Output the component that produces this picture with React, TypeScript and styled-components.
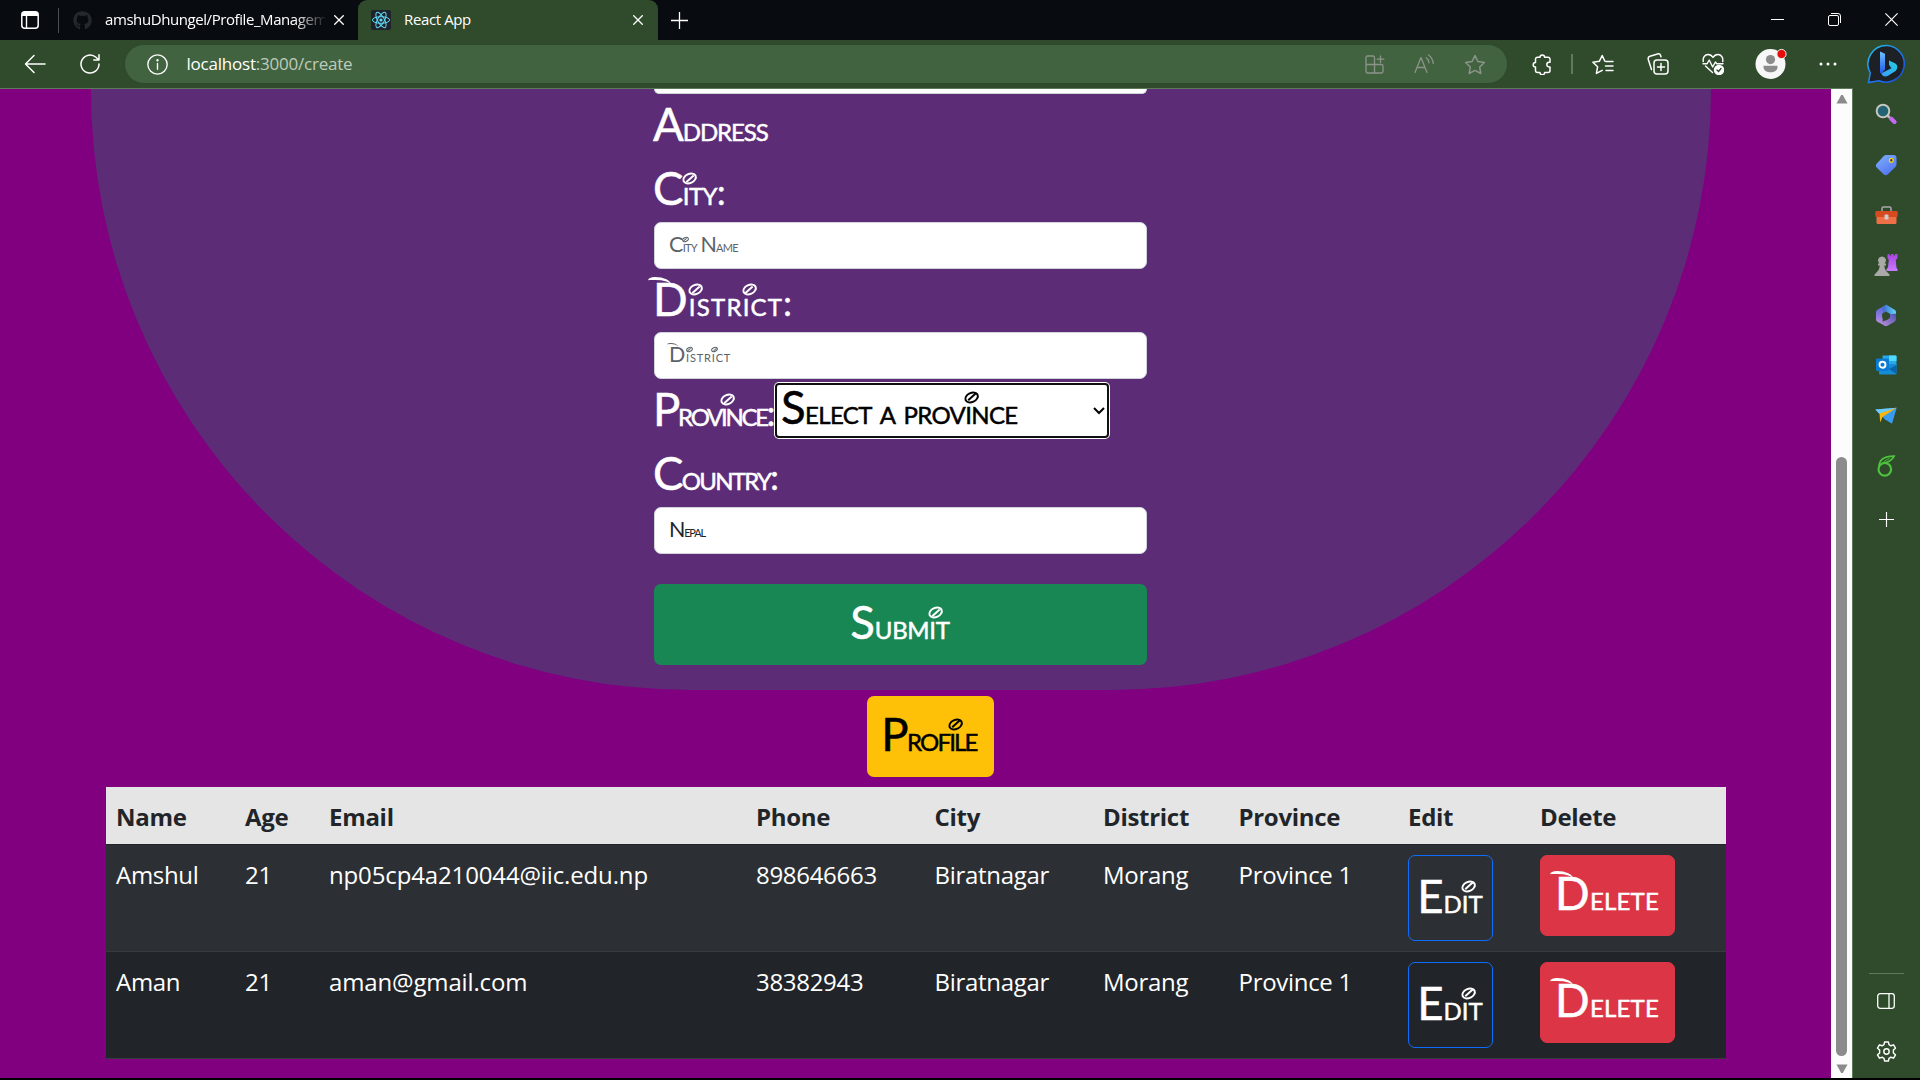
import React from "react";
import styled, { createGlobalStyle, css } from "styled-components";
import { FaGithub } from "react-icons/fa";

const uiFont = `"Open Sans", "Noto Sans", sans-serif`;

const GlobalStyle = createGlobalStyle`
  *, *::before, *::after { box-sizing: border-box; }
  html, body { margin: 0; padding: 0; overflow: hidden; background: #000; }
  body { font-family: ${uiFont}; }
  svg { display: block; flex: none; }
`;

/* ---------- browser frame ---------- */

const Window = styled.div`
  width: 1920px;
  height: 1080px;
  display: flex;
  flex-direction: column;
  overflow: hidden;
  background: #2f4b2c;
`;

const TabStrip = styled.div`
  height: 40px;
  flex: none;
  display: flex;
  align-items: stretch;
  background: #080c10;
  color: #fff;
`;

const StripStart = styled.div`
  width: 60px;
  display: flex;
  align-items: center;
  padding-left: 21px;
  gap: 19px;
`;

const StripDivider = styled.i`
  width: 1px;
  height: 25px;
  background: #4c4f52;
`;

const ToolbarDivider = styled.i`
  width: 2px;
  height: 20px;
  background: #5d7a5a;
`;

const Tab = styled.div<{ $active?: boolean; $width: number }>`
  width: ${(p) => p.$width}px;
  display: flex;
  align-items: center;
  padding: 0 ${(p) => (p.$active ? 15 : 14)}px 0 13px;
  border-radius: ${(p) => (p.$active ? "9px 9px 0 0" : "0")};
  background: ${(p) => (p.$active ? "#2f4b2c" : "transparent")};
`;

const TabTitle = styled.span<{ $fade?: boolean; $spacing: number }>`
  flex: 1;
  min-width: 0;
  margin: 0 9px 2px 13px;
  overflow: hidden;
  white-space: nowrap;
  font-size: 15px;
  line-height: 20px;
  letter-spacing: ${(p) => p.$spacing}px;
  ${(p) =>
    p.$fade &&
    css`
      mask-image: linear-gradient(90deg, #000 86%, transparent 101%);
    `}
`;

const NewTab = styled.div`
  display: flex;
  align-items: center;
  padding-left: 13px;
`;

const WindowControls = styled.div`
  margin-left: auto;
  display: flex;
  align-items: center;
  gap: 44px;
  padding: 0 22px 1px 0;
`;

const Toolbar = styled.div`
  height: 48px;
  flex: none;
  display: flex;
  align-items: center;
  color: #fff;
`;

const NavButtons = styled.div`
  width: 125px;
  flex: none;
  display: flex;
  align-items: center;
  gap: 34px;
  padding-left: 24px;
`;

const AddressBar = styled.div`
  width: 1382px;
  height: 38px;
  flex: none;
  border-radius: 19px;
  background: #42633f;
  display: flex;
  align-items: center;
  padding: 0 21px 0 22px;
`;

const Url = styled.span`
  flex: 1;
  padding-left: 18.5px;
  font-size: 17px;
  line-height: 24px;
  letter-spacing: -0.22px;
  color: #bfcbbd;
  b { font-weight: 400; color: #fff; }
`;

const AddressActions = styled.div`
  display: flex;
  align-items: center;
  gap: 29px;
  color: #8c948a;
`;

const ToolbarActions = styled.div`
  flex: 1;
  min-width: 0;
  display: flex;
  align-items: center;
  padding-left: 23px;
`;

const Slot = styled.div<{ $width: number; $before?: number }>`
  width: ${(p) => p.$width}px;
  margin-left: ${(p) => p.$before ?? 0}px;
  flex: none;
  display: flex;
  align-items: center;
  justify-content: center;
`;

const Body = styled.div`
  flex: 1;
  display: flex;
  min-height: 0;
  border-bottom: 2px solid #000;
`;

const Viewport = styled.main`
  width: 1831px;
  flex: none;
  height: 990px;
  overflow: hidden;
  border-top: 1px solid #5d7a5a;
  background: #800080;
  display: flex;
  flex-direction: column;
`;

const Scrollbar = styled.div`
  width: 22px;
  flex: none;
  display: flex;
  flex-direction: column;
  align-items: center;
  padding: 5px 0 4px 0;
  background: #fcfcfc;
  border-top: 1px solid #5d7a5a;
  border-right: 1px solid #5d7a5a;
`;

const Thumb = styled.div`
  width: 11px;
  height: 599px;
  margin: auto 0 8px;
  border-radius: 6px;
  background: #8b8b8b;
`;

const Sidebar = styled.aside`
  flex: 1;
  display: flex;
  flex-direction: column;
  align-items: center;
  padding-right: 1px;
  color: #fff;
`;

const SideSlot = styled.div<{ $height: number }>`
  height: ${(p) => p.$height}px;
  flex: none;
  display: flex;
  align-items: center;
  justify-content: center;
`;

const SideDivider = styled.div`
  width: 35px;
  height: 1px;
  margin-top: auto;
  background: #5f7b5c;
`;

/* ---------- decorative lettering ---------- */

const Lettering = styled.span<{ $size: number; $spacing: number; $color: string }>`
  display: inline-block;
  font-family: Lato, "Open Sans", sans-serif;
  font-variant-caps: small-caps;
  font-size: ${(p) => p.$size}px;
  line-height: 1;
  letter-spacing: ${(p) => p.$spacing}px;
  color: ${(p) => p.$color};
  -webkit-text-stroke: ${(p) => (p.$size > 20 ? 0.5 : 0)}px currentColor;
  white-space: pre;
  margin-left: -1px;
`;

const Initial = styled.span<{ $swash?: boolean }>`
  position: relative;
  font-size: 1.34em;
  line-height: 0;
  ${(p) =>
    p.$swash &&
    css`
      &::before {
        content: "";
        position: absolute;
        left: -0.1em;
        top: 0.13em;
        width: 0.5em;
        height: 0.25em;
        border-top: 0.075em solid currentColor;
        border-radius: 30% 70% 0 0;
      }
    `}
`;

/* the swirled dot over every "i" */
const DottedI = styled.span`
  position: relative;
  &::before {
    content: "";
    position: absolute;
    left: -0.03em;
    top: 0.07em;
    width: 0.44em;
    height: 0.31em;
    border: 0.085em solid currentColor;
    border-radius: 50%;
    transform: rotate(-25deg);
  }
  &::after {
    content: "";
    position: absolute;
    left: 0.05em;
    top: 0.2em;
    width: 0.28em;
    height: 0.06em;
    background: currentColor;
    transform: rotate(-42deg);
  }
`;

function Script({ text, size = 34, spacing = 0, color = "#fff" }: {
  text: string; size?: number; spacing?: number; color?: string;
}) {
  return (
    <Lettering $size={size} $spacing={spacing} $color={color}>
      {text.split("").map((ch, i) => {
        if (/[A-Z]/.test(ch)) return <Initial key={i} $swash={ch === "D"}>{ch}</Initial>;
        if (ch === "i") return <DottedI key={i}>{ch}</DottedI>;
        return ch;
      })}
    </Lettering>
  );
}

/* ---------- page ---------- */

const FormPanel = styled.section`
  width: 1620px;
  height: 601px;
  flex: none;
  margin-left: 91px;
  border-radius: 0 0 600px 600px;
  background: #5c2d76;
  display: flex;
  justify-content: center;
`;

const Form = styled.div`
  width: 493px;
  margin-right: 1px;
  display: flex;
  flex-direction: column;
`;

const ClippedInput = styled.div`
  height: 5px;
  flex: none;
  border-radius: 0 0 7px 7px;
  background: #fff;
  border: 1px solid #ced4da;
  border-top: 0;
`;

const FieldLabel = styled.div<{ $height?: number }>`
  height: ${(p) => p.$height ?? 64}px;
  flex: none;
  display: flex;
  align-items: flex-start;
  padding-top: 17px;
`;

const Input = styled.div`
  height: 47px;
  flex: none;
  display: flex;
  align-items: center;
  padding: 0 15px;
  border: 1px solid #ced4da;
  border-radius: 7px;
  background: #fff;
`;

const ProvinceRow = styled.div`
  height: 64px;
  flex: none;
  display: flex;
  align-items: flex-start;
`;

const ProvinceLabel = styled.div`
  width: 121px;
  padding-top: 17px;
  white-space: nowrap;
`;

const Select = styled.div`
  width: 334px;
  height: 55px;
  margin-top: 4px;
  display: flex;
  align-items: center;
  justify-content: space-between;
  padding: 0 2px 0 5px;
  border: 2px solid #101010;
  box-shadow: 0 0 0 1px #fff;
  border-radius: 4px;
  background: #fff;
`;

const SubmitButton = styled.div`
  height: 81px;
  flex: none;
  margin-top: 30px;
  display: flex;
  align-items: center;
  justify-content: center;
  padding-top: 3px;
  border-radius: 7px;
  background: #198754;
`;

const ProfileButton = styled.div`
  width: 127px;
  height: 81px;
  flex: none;
  margin: 6px 0 10px 867px;
  display: flex;
  align-items: center;
  justify-content: center;
  padding: 2px 2px 0 0;
  border-radius: 7px;
  background: #ffc107;
`;

const Table = styled.div`
  width: 1620px;
  flex: none;
  margin-left: 106px;
  font-size: 24px;
`;

const columns = "129px 84px 427px 178.5px 168.5px 135.5px 169.5px 132px 1fr";

const HeadRow = styled.div`
  height: 58px;
  display: grid;
  grid-template-columns: ${columns};
  background: #e5e5e5;
  border-bottom: 1px solid #212529;
  color: #212529;
  font-weight: 700;
`;

const Row = styled.div<{ $striped?: boolean }>`
  height: 107px;
  display: grid;
  grid-template-columns: ${columns};
  background: ${(p) => (p.$striped ? "#2c3034" : "#212529")};
  border-bottom: 1px solid #373b3e;
  color: #fff;
`;

const Cell = styled.div<{ $spacing?: number }>`
  padding: 11px 0 0 10px;
  line-height: 37px;
  letter-spacing: ${(p) => p.$spacing ?? -0.3}px;
  white-space: nowrap;
`;

const ActionCell = styled.div`
  padding: 10px 0 0 10px;
`;

const ActionButton = styled.div<{ $kind: "edit" | "delete" }>`
  width: ${(p) => (p.$kind === "edit" ? 85 : 135)}px;
  height: ${(p) => (p.$kind === "edit" ? 86 : 81)}px;
  display: flex;
  align-items: center;
  justify-content: center;
  padding-top: 3px;
  border-radius: 7px;
  border: 1px solid ${(p) => (p.$kind === "edit" ? "#0d6efd" : "#dc3545")};
  background: ${(p) => (p.$kind === "edit" ? "transparent" : "#dc3545")};
`;

/* ---------- icons ---------- */

const line = { fill: "none", stroke: "currentColor", strokeWidth: 1.3, strokeLinecap: "round", strokeLinejoin: "round" } as const;

const Cross = ({ size = 10, color = "#fff" }: { size?: number; color?: string }) => (
  <svg width={size} height={size} viewBox="0 0 10 10" stroke={color} strokeWidth={size > 11 ? 0.9 : 1.3}><path d="M.3.3l9.4 9.4M9.7.3.3 9.7" /></svg>
);
const TabMenuIcon = () => (
  <svg width="18" height="18" viewBox="0 0 18 18"><rect x=".8" y=".8" width="16.4" height="16.4" rx="3" fill="none" stroke="#fff" strokeWidth="1.5" /><path d="M1 5V3a2 2 0 0 1 2-2h12a2 2 0 0 1 2 2v2z" fill="#fff" /><path d="M5.5 5v12" stroke="#fff" strokeWidth="1.4" /></svg>
);
const ReactIcon = () => (
  <svg width="20" height="20" viewBox="0 0 20 20"><rect width="20" height="20" rx="2" fill="#20232a" /><g fill="none" stroke="#61dafb" strokeWidth="1"><ellipse cx="10" cy="10" rx="8.6" ry="3.3" /><ellipse cx="10" cy="10" rx="8.6" ry="3.3" transform="rotate(60 10 10)" /><ellipse cx="10" cy="10" rx="8.6" ry="3.3" transform="rotate(120 10 10)" /></g><circle cx="10" cy="10" r="1.6" fill="#61dafb" /></svg>
);
const PlusIcon = ({ size }: { size: number }) => (
  <svg width={size} height={size} viewBox="0 0 16 16" stroke="#fff" strokeWidth="1.2"><path d="M8 0v16M0 8h16" /></svg>
);
const BackIcon = () => <svg width="22" height="20" viewBox="0 0 22 20" {...line} strokeWidth="1.5"><path d="M21 10H1.5M10 1.5 1.5 10l8.500 8.500" /></svg>;
const ReloadIcon = () => <svg width="20" height="20" viewBox="0 0 20 20" {...line} strokeWidth="1.5"><path d="M19 10a9 9 0 1 1-3-6.700l2.800 2.700M19 .8V6h-5.200" /></svg>;
const InfoIcon = () => <svg width="21" height="21" viewBox="0 0 20 20" {...line}><circle cx="10" cy="10" r="9.2" /><path d="M10 9v5.500" /><circle cx="10" cy="6" r=".5" fill="currentColor" /></svg>;
const AppsIcon = () => <svg width="20" height="20" viewBox="0 0 20 20" {...line}><path d="M9.500 10.500V3.500A1.500 1.500 0 0 0 8 2H2.500A1.500 1.500 0 0 0 1 3.500V17a2 2 0 0 0 2 2h13.500a1.500 1.500 0 0 0 1.500-1.500V12a1.500 1.500 0 0 0-1.500-1.500H1M9.500 10.500V19M15.500 2v6.500M12.200 5.200h6.600" /></svg>;
const ReadAloudIcon = () => <svg width="21" height="20" viewBox="0 0 21 20" {...line}><path d="M1 18.500 7 3.500l6 15M3.200 13.500h7.600M12.300 3.800c1.600 1.300 2.500 3 2.700 5M14.500 1c2.800 2 4.400 4.700 4.700 8.500" /></svg>;
const starPath = "M11 1.600l2.900 5.900 6.500.95-4.700 4.600 1.100 6.450L11 16.450 5.200 19.500l1.100-6.450-4.700-4.600 6.500-.95z";
const StarIcon = () => <svg width="22" height="21" viewBox="0 0 22 21" {...line} strokeWidth="1.5"><path d={starPath} /></svg>;
const PuzzleIcon = () => <svg width="20" height="21" viewBox="0 0 20 21" {...line} strokeWidth="1.5"><path d="M8 3.200a2.300 2.300 0 0 1 4.600 0h3.400a2 2 0 0 1 2 2v3.100h-.9a2.300 2.300 0 0 0 0 4.600h.9v3.600a2 2 0 0 1-2 2h-3.400a2.300 2.300 0 0 1-4.600 0H5.500a2 2 0 0 1-2-2v-3.400a2.300 2.300 0 0 1 0-4.600V5.200a2 2 0 0 1 2-2z" /></svg>;
const FavoritesIcon = () => <svg width="22" height="21" viewBox="0 0 22 21" {...line} strokeWidth="1.5"><path d="M13 7.200h-.1L10.200 1.500 7.300 7.300l-6.400 1 4.700 4.500-1.200 6.600 5.800-3M14 7.500h7M13.500 12h7.500M14 16.500h7" /></svg>;
const CollectionsIcon = () => <svg width="22" height="22" viewBox="0 0 22 22" {...line} strokeWidth="1.5"><rect x="7" y="7" width="14" height="14" rx="3" /><path d="M14 10.500v7M10.500 14h7M4.500 16.500 1.300 6.500a2.600 2.600 0 0 1 1.700-3.200L10.500 1a2.600 2.600 0 0 1 3.200 1.700l.3 1" /></svg>;
const HeartIcon = () => <svg width="22" height="22" viewBox="0 0 22 22" {...line} strokeWidth="1.400"><path d="M1.300 8.500C.5 4.500 3 1.500 6 1.500c2.200 0 3.900 1.100 5 3 1.100-1.900 2.800-3 5-3 3 0 5.500 3 4.700 7M3.500 13l7 6.500M1 10.700h4.200l2-3.700 3.500 7 2.700-5 1.400 1.700H21" /><circle cx="17" cy="17" r="4.500" fill="#fff" /><path d="m15 17 1.500 1.500 2.500-3" stroke="#2f4b2c" /></svg>;
const AvatarIcon = () => <svg width="32" height="34" viewBox="0 0 32 34"><circle cx="15.500" cy="17" r="15" fill="#f7f7f7" /><circle cx="15.500" cy="12.600" r="4.600" fill="#8b8b8b" /><path d="M8.500 18.800h14v1.200c0 3.400-3.200 5.300-7 5.300s-7-1.900-7-5.300z" fill="#8b8b8b" /><circle cx="26.500" cy="7" r="4.600" fill="#e60b0b" stroke="#f4eeee" strokeWidth="1" /></svg>;
const MoreIcon = () => <svg width="18" height="4" viewBox="0 0 18 4" fill="#fff"><circle cx="2" cy="2" r="1.500" /><circle cx="9" cy="2" r="1.500" /><circle cx="16" cy="2" r="1.500" /></svg>;
const BingIcon = () => (
  <svg width="40" height="40" viewBox="0 0 40 40">
    <defs>
      <linearGradient id="ring" x1="0" y1="0" x2="1" y2="1"><stop offset="0" stopColor="#27c6e8" /><stop offset=".6" stopColor="#1b6ff0" /><stop offset="1" stopColor="#164bd0" /></linearGradient>
      <linearGradient id="stem" x1="0" y1="0" x2="0" y2="1"><stop offset="0" stopColor="#6cc4ff" /><stop offset="1" stopColor="#1f55e8" /></linearGradient>
      <linearGradient id="bowl" x1="1" y1="0" x2="0" y2="1"><stop offset="0" stopColor="#1fd0dc" /><stop offset="1" stopColor="#3d9bff" /></linearGradient>
    </defs>
    <path d="M20 1.500A18.300 18.300 0 1 1 12 36.700L1.500 38.500l1.800-9.500A18.500 18.500 0 0 1 20 1.500z" fill="#1d2024" stroke="url(#ring)" strokeWidth="1.500" />
    <path d="M13 7.500l5 2.300v15.500l-3.500 4.500-1.500-1.500z" fill="url(#stem)" />
    <path d="M22 16.500l6 2.800c2.800 1.600 3.100 5 .6 7.700l-7.600 4.700c-3 1.600-6.300.3-6.600-2.500l10-5-2.400-3.500z" fill="url(#bowl)" />
  </svg>
);
const SearchIcon = () => <svg width="22" height="22" viewBox="0 0 22 22"><path d="m16 15.500 3.500 3.500" stroke="#c668f5" strokeWidth="4" strokeLinecap="round" /><path d="m12.500 12.500 2 2" stroke="#bbb" strokeWidth="2.500" /><circle cx="8" cy="8" r="6.300" fill="#226374" stroke="#c5c6bd" strokeWidth="2" /></svg>;
const TagIcon = () => <svg width="22" height="22" viewBox="0 0 22 22"><defs><linearGradient id="tag" x1="0" y1="0" x2=".7" y2="1"><stop offset="0" stopColor="#80b2ff" /><stop offset="1" stopColor="#5273ef" /></linearGradient></defs><path d="M11 1h7.500a3 3 0 0 1 3 3v6.500a3 3 0 0 1-.9 2.200l-7.700 7.500a3 3 0 0 1-4.300 0l-6.700-6.500a3 3 0 0 1 0-4.300L8.800 2a3 3 0 0 1 2.200-1z" fill="url(#tag)" /><circle cx="16.300" cy="6.300" r="1.900" fill="#345" stroke="#f7cf1c" strokeWidth="1.300" /></svg>;
const ToolboxIcon = () => <svg width="23" height="19" viewBox="0 0 23 19"><path d="M7 5V2.500A1.500 1.500 0 0 1 8.500 1h6A1.500 1.500 0 0 1 16 2.500V5" fill="none" stroke="#aaa" strokeWidth="1.500" /><path d="M1.500 10h20v6.500A1.500 1.500 0 0 1 20 18H3a1.500 1.500 0 0 1-1.500-1.500z" fill="#ed7046" /><rect x=".3" y="5" width="22.400" height="6" rx="1.300" fill="#d54a1e" /><rect x="9.500" y="8.500" width="4" height="5" rx="1" fill="#ccc" /></svg>;
const ChessIcon = () => <svg width="24" height="24" viewBox="0 0 24 24"><defs><linearGradient id="rook" x1="0" y1="0" x2="0" y2="1"><stop offset="0" stopColor="#a943df" /><stop offset="1" stopColor="#c97bff" /></linearGradient></defs><path d="M13.500 1h2v1.500H17V1h2.500v1.500H21V1h2.500v4L21.800 7l.6 7.500 1.100 1.500v2H12.500v-2l1.500-1.500L14.800 7l-1.300-2z" fill="url(#rook)" /><path d="M8 3.500a4 4 0 0 1 2.700 7H12v2h-1.700c.2 3.500 1.200 5 3.700 7.500l1.500 1.500V23H.5v-1.500L2 20c2.500-2.500 3.500-4 3.700-7.500H4v-2h1.300A4 4 0 0 1 8 3.500z" fill="#aaa9a8" /></svg>;
const M365Icon = () => (
  <svg width="22" height="23" viewBox="0 0 22 23">
    <defs>
      <linearGradient id="m1" x1="0" y1="0" x2="0" y2="1"><stop offset="0" stopColor="#4a63d4" /><stop offset="1" stopColor="#b78be5" /></linearGradient>
      <linearGradient id="m2"><stop offset="0" stopColor="#3d6bce" /><stop offset="1" stopColor="#65d9f5" /></linearGradient>
      <linearGradient id="m3" x1="0" y1="1" x2="1" y2="0"><stop offset="0" stopColor="#c592dc" /><stop offset="1" stopColor="#4a52b5" /></linearGradient>
    </defs>
    <path d="M11 .8 8.300 2.200l-6 3.600A3 3 0 0 0 1 8.300v7c0 1.200.6 2 1.500 2.600l2.700 1.100c2-.3 2.500-1.800 2.500-3.500V9.200z" fill="url(#m1)" />
    <path d="M11 .8 8 3.200v7.300L11 8.300l10 5V8.300a3 3 0 0 0-1.400-2.500L13 1.700a4 4 0 0 0-2-.9z" fill="url(#m2)" />
    <path d="M21 9.500V15a3.300 3.300 0 0 1-1.500 2.800l-7 4a3 3 0 0 1-3 0l-5.500-3.300 8-2.600 3-2.400V10.500z" fill="url(#m3)" />
    <path d="m11 7.600 3.800 2.200v4L11 16l-3.800-2.200v-4z" fill="#2f4b2c" />
  </svg>
);
const OutlookIcon = () => <svg width="21" height="20" viewBox="0 0 21 20"><path d="M6.500.5h13a1 1 0 0 1 1 1V11h-14z" fill="#29a8ea" /><path d="M13 .5h6.500a1 1 0 0 1 1 1V6H13z" fill="#50d9ff" /><path d="M3 9h17.500v9.500a1 1 0 0 1-1 1H4a1 1 0 0 1-1-1z" fill="#168bd6" /><path d="M20.500 10v9L13 14z" fill="#0a64a8" /><rect x="0" y="3.500" width="13" height="12.500" rx="1" fill="#087bd4" /><circle cx="6.500" cy="9.700" r="3" fill="none" stroke="#fff" strokeWidth="1.900" /></svg>;
const PlaneIcon = () => <svg width="22" height="18" viewBox="0 0 22 18"><path d="M.3 2.500 21.700.8 17 16.800l-7-4.300z" fill="#3a9cf0" /><path d="M.3 2.500 21.700.8 4.500 7z" fill="#6ccbf8" /><path d="M4.500 6.500 21.700.8 7.500 10 5.200 15.500z" fill="#f8b50c" /></svg>;
const LeafIcon = () => <svg width="20" height="22" viewBox="0 0 20 22" fill="none" stroke="#4cc23d"><circle cx="8.800" cy="14.300" r="6.300" strokeWidth="2.200" /><path d="M3 13C2.500 5 8 1 18.200 1.200 16 5.500 12.500 7.500 7 8" strokeWidth="1.700" /><path d="M6 9c2-2.800 4.300-4.300 7.500-5.500" strokeWidth="1" /></svg>;
const PanelIcon = () => <svg width="18" height="16" viewBox="0 0 18 16" {...line}><rect x=".7" y=".7" width="16.600" height="14.600" rx="2.500" /><path d="M12 1v14" /></svg>;
const GearIcon = () => <svg width="21" height="21" viewBox="0 0 22 22" {...line} strokeWidth="1.500"><path d="M9 1h4l.6 2.900 2 1.100 2.800-1 2 3.500L18.200 9.500v3l2.200 2-2 3.500-2.800-1-2 1.100L13 21H9l-.6-2.900-2-1.100-2.800 1-2-3.500 2.200-2v-3l-2.200-2 2-3.500 2.800 1 2-1.100z" /><circle cx="11" cy="11" r="2.800" /></svg>;
const Arrow = ({ down }: { down?: boolean }) => <svg width="12" height="10" viewBox="0 0 12 10"><path d={down ? "M.5.500h11L6.800 9H5.200z" : "M.5 9.500h11L6.800 1H5.200z"} fill="#8b8b8b" /></svg>;

/* ---------- data ---------- */

const headings = ["Name", "Age", "Email", "Phone", "City", "District", "Province", "Edit", "Delete"];
const people = [
  ["Amshul", "21", "np05cp4a210044@iic.edu.np", "898646663", "Biratnagar", "Morang", "Province 1"],
  ["Aman", "21", "aman@gmail.com", "38382943", "Biratnagar", "Morang", "Province 1"],
];

export default function App() {
  return (
    <>
      <GlobalStyle />
      <Window>
        <TabStrip>
          <StripStart><TabMenuIcon /><StripDivider /></StripStart>
          <Tab $width={298}>
            <FaGithub size={19} color="#24292e" />
            <TabTitle $fade $spacing={-0.42}>amshuDhungel/Profile_Managem</TabTitle>
            <Cross />
          </Tab>
          <Tab $active $width={300}>
            <ReactIcon />
            <TabTitle $spacing={-0.38}>React App</TabTitle>
            <Cross />
          </Tab>
          <NewTab><PlusIcon size={17} /></NewTab>
          <WindowControls>
            <svg width="13" height="13" stroke="#fff"><path d="M0 6.500h13" /></svg>
            <svg width="13" height="13" fill="none" stroke="#fff"><rect x=".5" y="2.500" width="10" height="10" rx="1.500" /><path d="M3 .5h7A2.500 2.500 0 0 1 12.500 3v7" /></svg>
            <Cross size={13} />
          </WindowControls>
        </TabStrip>
        <Toolbar>
          <NavButtons><BackIcon /><ReloadIcon /></NavButtons>
          <AddressBar>
            <InfoIcon />
            <Url><b>localhost</b>:3000/create</Url>
            <AddressActions><AppsIcon /><ReadAloudIcon /><StarIcon /></AddressActions>
          </AddressBar>
          <ToolbarActions>
            <Slot $width={23}><PuzzleIcon /></Slot>
            <Slot $width={38}><ToolbarDivider /></Slot>
            <Slot $width={24}><FavoritesIcon /></Slot>
            <Slot $width={86}><CollectionsIcon /></Slot>
            <Slot $width={24}><HeartIcon /></Slot>
            <Slot $width={72} $before={10}><AvatarIcon /></Slot>
            <Slot $width={42}><MoreIcon /></Slot>
            <Slot $width={76}><BingIcon /></Slot>
          </ToolbarActions>
        </Toolbar>
        <Body>
          <Viewport>
            <FormPanel>
              <Form>
                <ClippedInput />
                <FieldLabel><Script text="Address" spacing={-1.1} /></FieldLabel>
                <FieldLabel><Script text="City:" spacing={-0.6} /></FieldLabel>
                <Input><Script text="City Name" size={16} spacing={-0.7} color="#5c6368" /></Input>
                <FieldLabel $height={63}><Script text="District:" spacing={1.2} /></FieldLabel>
                <Input><Script text="District" size={16} spacing={0.8} color="#5c6368" /></Input>
                <ProvinceRow>
                  <ProvinceLabel><Script text="Province:" spacing={-2.3} /></ProvinceLabel>
                  <Select>
                    <Script text="Select a province" spacing={-0.65} color="#000" />
                    <svg width="12" height="8" viewBox="0 0 12 8" fill="none" stroke="#000" strokeWidth="2"><path d="m1 1 5 5 5-5" /></svg>
                  </Select>
                </ProvinceRow>
                <FieldLabel><Script text="Country:" spacing={-1.7} /></FieldLabel>
                <Input><Script text="Nepal" size={16} spacing={-1.2} color="#212529" /></Input>
                <SubmitButton><Script text="Submit" spacing={-0.3} /></SubmitButton>
              </Form>
            </FormPanel>
            <ProfileButton><Script text="Profile" spacing={-1.8} color="#000" /></ProfileButton>
            <Table>
              <HeadRow>{headings.map((h) => <Cell key={h}>{h}</Cell>)}</HeadRow>
              {people.map((person, i) => (
                <Row key={person[0]} $striped={i === 0}>
                  {person.map((value, c) => <Cell key={c} $spacing={c === 2 ? -0.14 : undefined}>{value}</Cell>)}
                  <ActionCell><ActionButton $kind="edit"><Script text="Edit" /></ActionButton></ActionCell>
                  <ActionCell><ActionButton $kind="delete"><Script text="Delete" spacing={0.2} /></ActionButton></ActionCell>
                </Row>
              ))}
            </Table>
          </Viewport>
          <Scrollbar><Arrow /><Thumb /><Arrow down /></Scrollbar>
          <Sidebar>
            <SideSlot $height={52}><SearchIcon /></SideSlot>
            <SideSlot $height={50}><TagIcon /></SideSlot>
            <SideSlot $height={50}><ToolboxIcon /></SideSlot>
            <SideSlot $height={50}><ChessIcon /></SideSlot>
            <SideSlot $height={50}><M365Icon /></SideSlot>
            <SideSlot $height={50}><OutlookIcon /></SideSlot>
            <SideSlot $height={51}><PlaneIcon /></SideSlot>
            <SideSlot $height={50}><LeafIcon /></SideSlot>
            <SideSlot $height={57}><PlusIcon size={15} /></SideSlot>
            <SideDivider />
            <SideSlot $height={54}><PanelIcon /></SideSlot>
            <SideSlot $height={46}><GearIcon /></SideSlot>
            <SideSlot $height={4} />
          </Sidebar>
        </Body>
      </Window>
    </>
  );
}
